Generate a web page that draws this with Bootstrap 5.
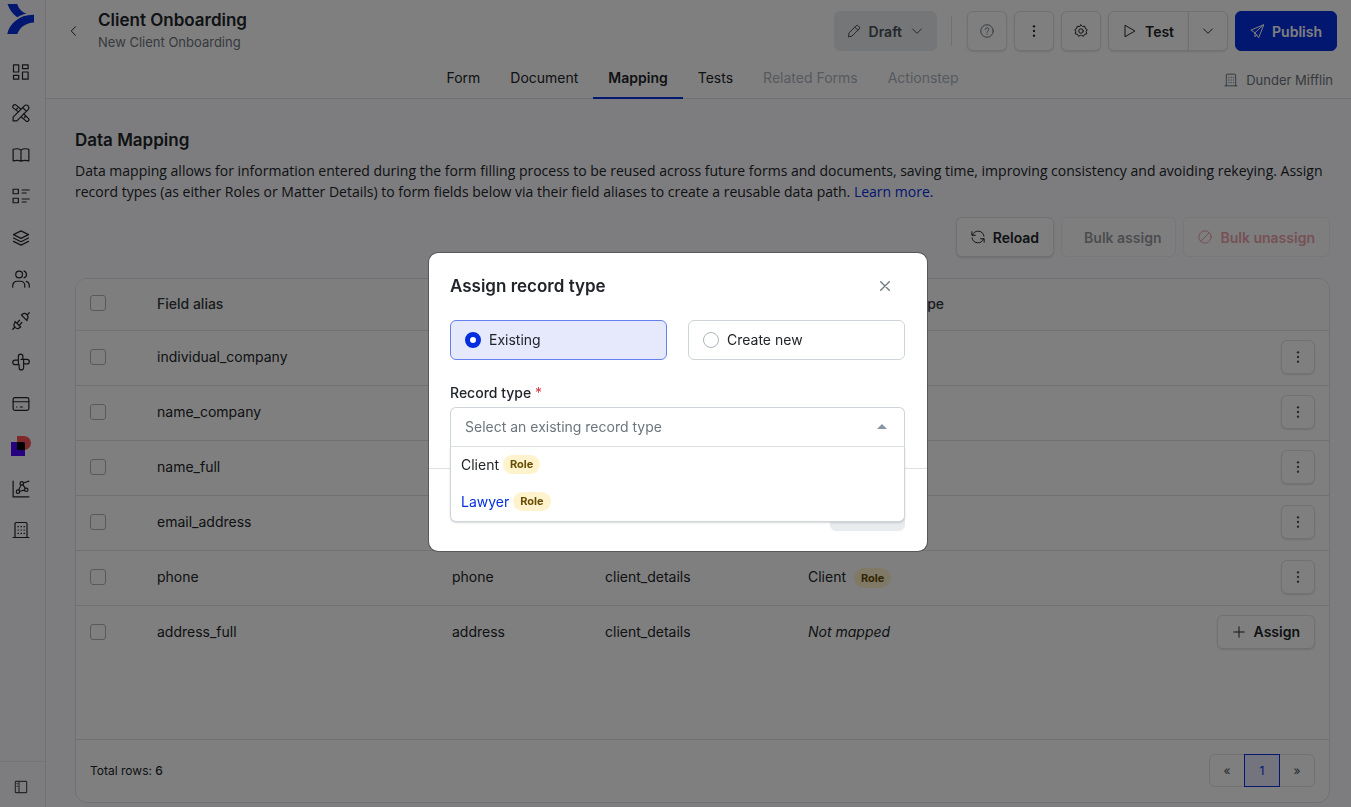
<!DOCTYPE html>
<html lang="en">
<head>
<meta charset="utf-8">
<meta name="viewport" content="width=device-width, initial-scale=1">
<title>Client Onboarding – Mapping</title>
<link href="https://cdn.jsdelivr.net/npm/bootstrap@5.3.0/dist/css/bootstrap.min.css" rel="stylesheet">
<style>
  :root { --brand: #032ee0; --line: #dee2e6; --ink: #212529; }
  body { font-family: Inter, "Open Sans", sans-serif; font-size: 14px; line-height: 21px; color: var(--ink); background: #fafafe; }
  svg { display: block; flex: none; }
  .ico { width: 14px; height: 14px; fill: none; stroke: currentColor; stroke-width: 1.7; stroke-linecap: round; stroke-linejoin: round; }
  .btn { --bs-btn-font-size: 14px; --bs-btn-line-height: 21px; --bs-btn-font-weight: 600; --bs-btn-border-radius: 6px; --bs-btn-padding-x: 14px; --bs-btn-padding-y: 8px; min-height: 40px; }

  .side { width: 46px; border-right: 1px solid var(--line); }
  .side-logo { width: 41px; height: 63px; padding: 4px 0 0 7px; }
  .side-nav { flex: 0 1 476px; width: 41px; }
  .side-nav a, .side-foot { color: var(--ink); }
  .side-nav .ico { width: 18px; height: 18px; stroke-width: 1.6; }
  .side-foot { height: 46px; border: 0; border-top: 1px solid var(--line); background: none; padding: 4px 0 0 13px; opacity: .8; }
  .side-foot .ico { width: 16px; height: 16px; }

  .top { background: #fff; border-bottom: 1px solid var(--line); padding: 0 14px 0 22px; }
  .top-bar { padding-top: 4px; height: 58px; }
  .top-title { font-size: 17px; line-height: 22px; font-weight: 600; margin: 0 0 1px; }
  .top-note { font-size: 13px; line-height: 21px; }
  .btn-line { gap: 7px; }
  .btn-plain { --bs-btn-bg: #fff; --bs-btn-color: #212529; --bs-btn-border-color: var(--line); --bs-btn-hover-bg: #f4f5f8; --bs-btn-disabled-bg: #fff; --bs-btn-disabled-color: #212529; --bs-btn-disabled-border-color: var(--line); --bs-btn-disabled-opacity: .45; box-shadow: 0 1px 2px rgba(0,0,0,.12); }
  .btn-plain:disabled { box-shadow: none; }
  .btn-square { width: 40px; padding: 0; }
  .btn-brand { --bs-btn-bg: var(--brand); --bs-btn-color: #fff; --bs-btn-border-color: var(--brand); --bs-btn-hover-bg: #0226bb; --bs-btn-hover-color: #fff; }
  .btn-draft { --bs-btn-bg: #e9ecef; --bs-btn-color: #495057; --bs-btn-border-color: #e9ecef; --bs-btn-hover-bg: #dde1e5; --bs-btn-disabled-bg: #e9ecef; --bs-btn-disabled-border-color: #e9ecef; --bs-btn-disabled-opacity: 1; --bs-btn-padding-x: 12px; }
  .rule { width: 1px; height: 30px; background: var(--line); margin: 0 15px 0 14px; }
  .top-tabs { display: grid; grid-template-columns: 1fr auto 1fr; height: 40px; }
  .top-tabs .nav { grid-column: 2; }
  .top-tabs .nav-link { color: var(--ink); padding: 9px 15px 8px; border-bottom: 2px solid transparent; margin-bottom: -1px; height: 41px; }
  .top-tabs .nav-link.active { font-weight: 600; border-color: var(--brand); }
  .top-tabs .nav-link.disabled { color: #adb5bd; }

  .page { padding: 31px 21px 4px 29px; }
  .page-title { font-size: 17px; line-height: 21px; font-weight: 600; margin: 0 0 9px; }
  .page-intro { font-family: "Open Sans", sans-serif; margin: 0 0 15px; }
  .page a { color: var(--brand); text-decoration: none; }
  .tools { margin-bottom: 21px; }
  .panel { background: #fff; border: 1px solid var(--line); border-radius: 12px; overflow: hidden; }
  .grid-table { --bs-table-bg: transparent; table-layout: fixed; color: var(--ink); margin: 0; }
  .grid-table th, .grid-table td { height: 55px; padding: 0 14px 2px 15px; vertical-align: middle; border-color: var(--line); }
  .grid-table th:first-child, .grid-table td:first-child { padding-left: 14px; }
  .grid-table thead th { height: 51px; font-weight: 500; color: #343a40; background: #fcfcfc; }
  .grid-table tbody tr:last-child td { border-bottom: 0; }
  .col-tick { width: 66px; } .col-alias { width: 295px; } .col-a { width: 153px; } .col-b { width: 203px; }
  .tick { width: 16px; height: 16px; margin: 0; display: block; border-color: #adb5bd; }
  .tick.form-check-input[type=checkbox] { border-radius: 3px; }
  .btn-row { min-height: 34px; --bs-btn-padding-y: 5px; }
  .btn-row.btn-square { width: 34px; padding: 0; color: #495057; }
  .role-pill { background: #fff3cd; color: #664d03; font-size: 11px; line-height: 13px; font-weight: 700; padding: 3px 7px; border-radius: 10px; }
  .panel-foot { border-top: 1px solid var(--line); height: 63px; padding: 0 14px 2px; font-size: 12px; }
  .pagination { --bs-pagination-font-size: 12px; --bs-pagination-padding-x: 0; --bs-pagination-padding-y: 5px; --bs-pagination-color: #495057; --bs-pagination-active-bg: #e6e9fb; --bs-pagination-active-color: var(--brand); --bs-pagination-active-border-color: var(--brand); }
  .page-link { width: 36px; text-align: center; }
  .page .page-link:not(.active) { color: #495057; }

  #assign { padding: 0 0 4px 5px; }
  #assign .modal-content { border-radius: 10px; border-color: rgba(0,0,0,.3); }
  #assign .modal-body { padding: 20px 22px 21px 21px; }
  .modal-head { margin-bottom: 21px; }
  .modal-name { font-size: 17px; line-height: 24px; font-weight: 600; margin: 0; }
  .btn-x { border: 0; background: none; padding: 8px 15px; color: #6c757d; }
  .choices { gap: 21px; margin-bottom: 22px; }
  .choice { flex: 1; height: 40px; border: 1px solid #ced4da; border-radius: 6px; padding: 0 14px; }
  .choice.on { background: #e6e9fc; border-color: #6581f0; }
  .choice .form-check-input { width: 16px; height: 16px; margin: 0; float: none; border-color: #adb5bd; }
  .choice .form-check-input:checked { background: #fff; border: 5px solid var(--brand); }
  .picker-label { display: block; margin-bottom: 4px; }
  .picker-label .text-danger { font-weight: 400; }
  .picker select { height: 40px; font-size: 14px; color: #6c757d; border: 1px solid #ced4da; border-bottom-color: var(--line); border-radius: 6px 6px 0 0; padding: 0 14px; background-image: none; }
  .picker-caret { position: absolute; right: 18px; top: 17px; color: #8795a3; }
  .picker-menu { position: absolute; top: 40px; left: 0; right: 0; z-index: 2; background: #fff; border: 1px solid #ced4da; border-top: 0; border-radius: 0 0 6px 6px; box-shadow: 0 1px 2px rgba(0,0,0,.15); margin: 0; padding: 0; list-style: none; }
  .picker-menu li { height: 37px; padding: 0 10px 2px; }
  .picker-menu .hot { color: var(--brand); }
  #assign .modal-footer { border-color: var(--line); padding: 22px 22px 20px 21px; }
  #assign .modal-footer > * { margin: 0; }
  .btn-save { width: 75px; }
</style>
</head>
<body class="d-flex min-vh-100">

<svg class="d-none" aria-hidden="true">
  <symbol id="i-dash" viewBox="0 0 24 24"><path d="M2 2.500h7v9.500H2zM14 2.500h7.500v5H14zM14 12h7.500v9.500H14zM2 16.500h7v5H2z"/></symbol>
  <symbol id="i-tools" viewBox="0 0 24 24"><path d="M1.500 22.500v-5L16.500 2.500a3 3 0 0 1 5 5L6.500 22.500zM14.500 5l4.500 4.500M8.500 10.500L2 5.500a2.500 2.500 0 0 1 3.500-4L12 7M7.500 5.500L5.500 7.500M15.500 13l6.500 6.500a2.300 2.300 0 0 1-3.500 3L12 17M18.500 16l-2 2"/></symbol>
  <symbol id="i-book" viewBox="0 0 24 24"><path d="M12 5.500C10 4 5.500 3.300 1.500 4.300v15.500c4-1 8.500-.5 10.500.5 2-1 6.500-1.500 10.500-.5V4.300c-4-1-8.500-.3-10.500 1.200zM12 5.500V20"/></symbol>
  <symbol id="i-list" viewBox="0 0 24 24"><path d="M1.500 3H8.500v6H1.500zM1.500 15H8.500v6H1.500zM13.500 4H23M13.500 8H19M13.500 16H23M13.500 20H19"/></symbol>
  <symbol id="i-layers" viewBox="0 0 24 24"><path d="M12 2.500L22 7.500 12 12.500 2 7.500zM2 12l10 5 10-5M2 16.500l10 5 10-5"/></symbol>
  <symbol id="i-users" viewBox="0 0 24 24"><circle cx="9.500" cy="6" r="4.500"/><path d="M1 23v-2.500A5.500 5.500 0 0 1 6.500 15h5a5.500 5.500 0 0 1 5.500 5.500V23M16 1.500a4.700 4.700 0 0 1 0 9M19 15.200a5.500 5.500 0 0 1 4 5.300V23"/></symbol>
  <symbol id="i-plug" viewBox="0 0 24 24"><path d="M1 23l3-3M23 1l-3 3M4 12.500l7.500 7.500-1 .7a4.600 4.600 0 0 1-6.500-6.500zM20 11.500L12.500 4l1-.7a4.600 4.600 0 0 1 6.500 6.500zM7 14.500l3-3.500M10 17.500l3-3.500"/></symbol>
  <symbol id="i-hub" viewBox="0 0 24 24"><path d="M8.500 14.500V4.500a3 3 0 0 1 6 0V8M14.500 8.500h5.500a3 3 0 0 1 0 6h-3.500M15.500 9.500v10a3 3 0 0 1-6 0V16M9.500 15.500H4a3 3 0 0 1 0-6h4.500M12 8.500h2.500"/></symbol>
  <symbol id="i-card" viewBox="0 0 24 24"><rect x="1.500" y="3.500" width="21" height="17" rx="2.500"/><path d="M1.500 9h21M6 16h.5M11 16h3"/></symbol>
  <symbol id="i-chart" viewBox="0 0 24 24"><path d="M1.500 1.500v21h21"/><circle cx="8" cy="15.500" r="2.300"/><circle cx="19" cy="13" r="2.300"/><circle cx="13" cy="4.500" r="2.300"/><path d="M9 13.500l3-7M14.500 6.200l3.300 5M10.200 15l6.600-1.500M15.300 4L22.500 1.500"/></symbol>
  <symbol id="i-building" viewBox="0 0 24 24"><path d="M4 22V3.500A1.500 1.500 0 0 1 5.500 2h13A1.500 1.500 0 0 1 20 3.500V22M1.500 22h21M8 7.500h.6M12 7.500h.6M16 7.500h.6M8 12h.6M12 12h.6M16 12h.6M8 16.500h.6M12 16.500h.6M16 16.500h.6"/></symbol>
  <symbol id="i-panel" viewBox="0 0 24 24"><rect x="3.500" y="3.500" width="17" height="17" rx="1"/><path d="M9 3.500v17M6 7h.5M6 11h.5"/></symbol>
  <symbol id="i-left" viewBox="0 0 24 24"><path d="M13 4.500L5.500 12l7.500 7.500"/></symbol>
  <symbol id="i-down" viewBox="0 0 24 24"><path d="M4.500 8.500l7.500 7.500 7.500-7.500"/></symbol>
  <symbol id="i-pencil" viewBox="0 0 24 24"><path d="M2.500 21.500l1.200-6.500L15.500 3.200a2.700 2.700 0 0 1 4 0l1.300 1.300a2.700 2.700 0 0 1 0 4L9 20.300zM13.500 5.500l5 5"/></symbol>
  <symbol id="i-help" viewBox="0 0 24 24"><circle cx="12" cy="12" r="10.700"/><path d="M9 9.200a3 3 0 1 1 4.500 2.800c-1 .6-1.500 1.200-1.500 2.300M12 17.400v.3"/></symbol>
  <symbol id="i-dots" viewBox="0 0 24 24"><g fill="currentColor" stroke="none"><circle cx="12" cy="4" r="2"/><circle cx="12" cy="12" r="2"/><circle cx="12" cy="20" r="2"/></g></symbol>
  <symbol id="i-gear" viewBox="0 0 24 24"><circle cx="12" cy="12" r="3.800"/><path d="M12 1.500l2.700 2.900 3.900-.6.600 3.900 3.400 1.900-1.700 3.500 1 3.800-3.800.8L16.300 21l-3.600-1.600h-1.400L7.700 21l-1.800-3.300-3.800-.8 1-3.800-1.700-3.500 3.400-1.900.6-3.900 3.900.6z"/></symbol>
  <symbol id="i-play" viewBox="0 0 24 24"><path d="M4 2.500L20.500 12 4 21.500z"/></symbol>
  <symbol id="i-send" viewBox="0 0 24 24"><path d="M23 1.500L1.500 10.500l7 4.500 6 8zM8.500 15L23 1.500M8.500 15v7l3.200-3.200"/></symbol>
  <symbol id="i-reload" viewBox="0 0 24 24"><path d="M1.500 3V9H7.500M2.500 9a10.200 10.200 0 0 1 19.700 1.500M22.500 21V15H16.500M21.500 15a10.200 10.200 0 0 1-19.700-1.500"/></symbol>
  <symbol id="i-ban" viewBox="0 0 24 24"><circle cx="12" cy="12" r="10.500"/><path d="M5 19L19 5"/></symbol>
  <symbol id="i-plus" viewBox="0 0 24 24"><path d="M12 3v18M3 12h18"/></symbol>
</svg>

<aside class="side d-flex flex-column flex-shrink-0">
  <a class="side-logo" href="#" aria-label="Home">
    <svg width="28" height="31" viewBox="7 4 28 31" fill="#032ee0"><path d="M7.500 4H17.300C18.500 8.500 22 12.500 26.500 13.700 22.500 14.300 19.500 15.600 17.200 17.300 12.500 14 9.500 9.500 7.500 4z"/><path d="M34 14.800V22.600C26 23 20 27 17.300 34H7.200C9.500 24 19 14.500 34 14.800z"/></svg>
  </a>
  <nav class="side-nav d-flex flex-column align-items-center justify-content-between" aria-label="Main">
    <a href="#" aria-label="Dashboard"><svg class="ico"><use href="#i-dash"/></svg></a>
    <a href="#" aria-label="Builder"><svg class="ico"><use href="#i-tools"/></svg></a>
    <a href="#" aria-label="Library"><svg class="ico"><use href="#i-book"/></svg></a>
    <a href="#" aria-label="Lists"><svg class="ico"><use href="#i-list"/></svg></a>
    <a href="#" aria-label="Layers"><svg class="ico"><use href="#i-layers"/></svg></a>
    <a href="#" aria-label="Users"><svg class="ico"><use href="#i-users"/></svg></a>
    <a href="#" aria-label="Connections"><svg class="ico"><use href="#i-plug"/></svg></a>
    <a href="#" aria-label="Integrations"><svg class="ico"><use href="#i-hub"/></svg></a>
    <a href="#" aria-label="Billing"><svg class="ico"><use href="#i-card"/></svg></a>
    <a href="#" aria-label="Signing"><svg width="20" height="20" viewBox="0 0 20 20"><path fill="#ff5252" d="M6 0h7a7 7 0 0 1 0 14H6z"/><path fill="#4c00ff" d="M0 6h14v14H0z"/><path fill="#000" d="M6 6h6l2 2.500V14H6z"/></svg></a>
    <a href="#" aria-label="Reports"><svg class="ico"><use href="#i-chart"/></svg></a>
    <a href="#" aria-label="Organisation"><svg class="ico"><use href="#i-building"/></svg></a>
  </nav>
  <button class="side-foot mt-auto" type="button" aria-label="Toggle sidebar"><svg class="ico"><use href="#i-panel"/></svg></button>
</aside>

<div class="d-flex flex-column flex-grow-1">
  <header class="top">
    <div class="top-bar d-flex align-items-center">
      <a class="text-reset me-3" href="#" aria-label="Back"><svg class="ico"><use href="#i-left"/></svg></a>
      <div class="me-auto">
        <h1 class="top-title">Client Onboarding</h1>
        <div class="top-note text-secondary">New Client Onboarding</div>
      </div>
      <button class="btn btn-draft d-flex align-items-center gap-2" type="button"><svg class="ico"><use href="#i-pencil"/></svg>Draft<svg class="ico"><use href="#i-down"/></svg></button>
      <div class="rule"></div>
      <div class="d-flex btn-line">
        <button class="btn btn-plain btn-square d-flex align-items-center justify-content-center text-secondary" type="button" aria-label="Help"><svg class="ico"><use href="#i-help"/></svg></button>
        <button class="btn btn-plain btn-square d-flex align-items-center justify-content-center" type="button" aria-label="More"><svg class="ico"><use href="#i-dots"/></svg></button>
        <button class="btn btn-plain btn-square d-flex align-items-center justify-content-center" type="button" aria-label="Settings"><svg class="ico"><use href="#i-gear"/></svg></button>
        <div class="btn-group">
          <button class="btn btn-plain d-flex align-items-center gap-2" type="button"><svg class="ico"><use href="#i-play"/></svg>Test</button>
          <button class="btn btn-plain btn-square d-flex align-items-center justify-content-center" type="button" aria-label="Test options"><svg class="ico"><use href="#i-down"/></svg></button>
        </div>
        <button class="btn btn-brand d-flex align-items-center gap-2" type="button"><svg class="ico"><use href="#i-send"/></svg>Publish</button>
      </div>
    </div>
    <div class="top-tabs">
      <nav class="nav">
        <a class="nav-link" href="#">Form</a>
        <a class="nav-link" href="#">Document</a>
        <a class="nav-link active" aria-current="page" href="#">Mapping</a>
        <a class="nav-link" href="#">Tests</a>
        <a class="nav-link disabled" aria-disabled="true" href="#">Related Forms</a>
        <a class="nav-link disabled" aria-disabled="true" href="#">Actionstep</a>
      </nav>
      <div class="top-note d-flex align-items-center justify-content-end gap-2 text-secondary pt-1 me-1"><svg class="ico"><use href="#i-building"/></svg>Dunder Mifflin</div>
    </div>
  </header>

  <main class="page d-flex flex-column flex-grow-1">
    <h2 class="page-title">Data Mapping</h2>
    <p class="page-intro">Data mapping allows for information entered during the form filling process to be reused across future forms and documents, saving time, improving consistency and avoiding rekeying. Assign record types (as either Roles or Matter Details) to form fields below via their field aliases to create a reusable data path. <a href="#">Learn more.</a></p>
    <div class="d-flex justify-content-end btn-line tools">
      <button class="btn btn-plain d-flex align-items-center gap-2" type="button"><svg class="ico"><use href="#i-reload"/></svg>Reload</button>
      <button class="btn btn-plain d-flex align-items-center gap-2" type="button" disabled><span></span>Bulk assign</button>
      <button class="btn btn-plain d-flex align-items-center gap-2 text-danger" type="button" disabled><svg class="ico"><use href="#i-ban"/></svg>Bulk unassign</button>
    </div>

    <section class="panel d-flex flex-column flex-grow-1">
      <table class="table grid-table">
        <colgroup><col class="col-tick"><col class="col-alias"><col class="col-a"><col class="col-b"><col><col></colgroup>
        <thead>
          <tr><th scope="col"><input class="form-check-input tick" type="checkbox" aria-label="Select all"></th><th scope="col">Field alias</th><th></th><th></th><th scope="col">Mapped record type</th><th></th></tr>
        </thead>
        <tbody>
          <tr><td><input class="form-check-input tick" type="checkbox" aria-label="Select individual_company"></td><td>individual_company</td><td></td><td></td><td></td><td><button class="btn btn-plain btn-row btn-square d-flex align-items-center justify-content-center ms-auto" type="button" aria-label="Row actions"><svg class="ico"><use href="#i-dots"/></svg></button></td></tr>
          <tr><td><input class="form-check-input tick" type="checkbox" aria-label="Select name_company"></td><td>name_company</td><td></td><td></td><td></td><td><button class="btn btn-plain btn-row btn-square d-flex align-items-center justify-content-center ms-auto" type="button" aria-label="Row actions"><svg class="ico"><use href="#i-dots"/></svg></button></td></tr>
          <tr><td><input class="form-check-input tick" type="checkbox" aria-label="Select name_full"></td><td>name_full</td><td></td><td></td><td></td><td><button class="btn btn-plain btn-row btn-square d-flex align-items-center justify-content-center ms-auto" type="button" aria-label="Row actions"><svg class="ico"><use href="#i-dots"/></svg></button></td></tr>
          <tr><td><input class="form-check-input tick" type="checkbox" aria-label="Select email_address"></td><td>email_address</td><td></td><td></td><td></td><td><button class="btn btn-plain btn-row btn-square d-flex align-items-center justify-content-center ms-auto" type="button" aria-label="Row actions"><svg class="ico"><use href="#i-dots"/></svg></button></td></tr>
          <tr><td><input class="form-check-input tick" type="checkbox" aria-label="Select phone"></td><td>phone</td><td>phone</td><td>client_details</td><td>Client <span class="role-pill ms-1">Role</span></td><td><button class="btn btn-plain btn-row btn-square d-flex align-items-center justify-content-center ms-auto" type="button" aria-label="Row actions"><svg class="ico"><use href="#i-dots"/></svg></button></td></tr>
          <tr><td><input class="form-check-input tick" type="checkbox" aria-label="Select address_full"></td><td>address_full</td><td>address</td><td>client_details</td><td><em>Not mapped</em></td><td><button class="btn btn-plain btn-row d-flex align-items-center gap-2 ms-auto" type="button"><svg class="ico"><use href="#i-plus"/></svg>Assign</button></td></tr>
        </tbody>
      </table>
      <div class="panel-foot d-flex align-items-center justify-content-between mt-auto">
        <div>Total rows: <span class="fw-medium">6</span></div>
        <nav aria-label="Pages">
          <ul class="pagination mb-0">
            <li class="page-item"><a class="page-link" href="#" aria-label="Previous">«</a></li>
            <li class="page-item active"><a class="page-link active" href="#">1</a></li>
            <li class="page-item"><a class="page-link" href="#" aria-label="Next">»</a></li>
          </ul>
        </nav>
      </div>
    </section>
  </main>
</div>

<div class="modal-backdrop show"></div>
<div class="modal show d-block" id="assign" tabindex="-1" role="dialog" aria-modal="true" aria-labelledby="assign-title">
  <div class="modal-dialog modal-dialog-centered">
    <form class="modal-content">
      <div class="modal-body">
        <div class="modal-head d-flex align-items-center justify-content-between">
          <h2 class="modal-name" id="assign-title">Assign record type</h2>
          <button class="btn-x" type="button" aria-label="Close"><svg width="10" height="10" viewBox="0 0 10 10" fill="none" stroke="currentColor" stroke-width="1.300" stroke-linecap="round"><path d="M.7.7l8.600 8.600M9.300.7L.7 9.300"/></svg></button>
        </div>
        <div class="d-flex choices">
          <label class="choice on d-flex align-items-center gap-2"><input class="form-check-input" type="radio" name="mode" checked>Existing</label>
          <label class="choice d-flex align-items-center gap-2"><input class="form-check-input" type="radio" name="mode">Create new</label>
        </div>
        <label class="fw-medium picker-label" for="record">Record type <span class="text-danger">*</span></label>
        <div class="picker position-relative">
          <select class="form-select" id="record"><option>Select an existing record type</option></select>
          <svg class="picker-caret" width="10" height="5" viewBox="0 0 10 5" fill="currentColor"><path d="M0 5l5-5 5 5z"/></svg>
          <ul class="picker-menu" role="listbox" aria-label="Record type">
            <li class="d-flex align-items-center gap-1" role="option">Client <span class="role-pill">Role</span></li>
            <li class="d-flex align-items-center gap-1 hot" role="option" aria-selected="true">Lawyer <span class="role-pill">Role</span></li>
          </ul>
        </div>
      </div>
      <div class="modal-footer">
        <button class="btn btn-draft btn-save" type="button" disabled aria-label="Assign"></button>
      </div>
    </form>
  </div>
</div>

<script src="https://cdn.jsdelivr.net/npm/bootstrap@5.3.0/dist/js/bootstrap.bundle.min.js"></script>
</body>
</html>
